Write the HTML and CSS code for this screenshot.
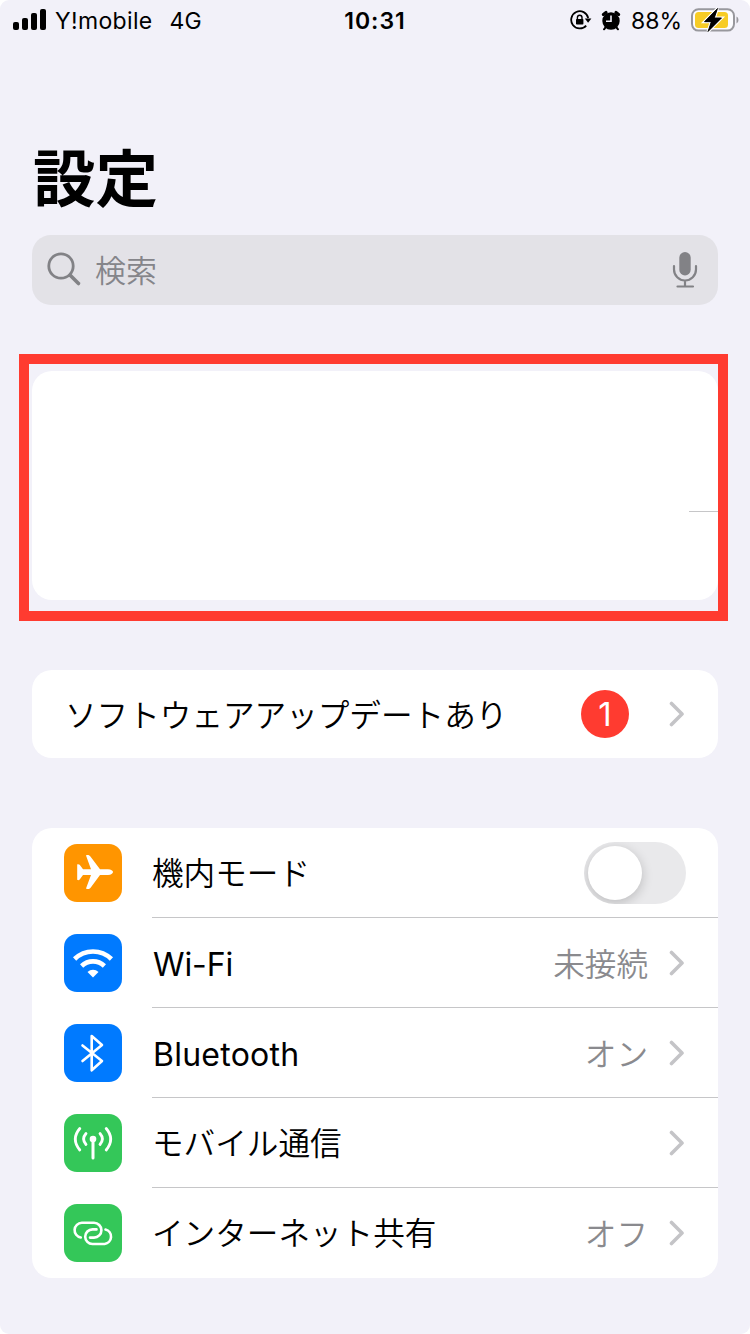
FILE: index.html
```html
<!DOCTYPE html>
<html lang="ja">
<head>
<meta charset="utf-8">
<title>設定</title>
<link rel="stylesheet" href="styles.css">
</head>
<body>
<main class="screen">
  <header class="status">
    <div class="status-left">
      <svg class="signal" width="34" height="22" viewBox="0 0 34 22"><rect x="0" y="13" width="6" height="8" rx="2"/><rect x="9" y="9" width="6" height="12" rx="2"/><rect x="18" y="4" width="6" height="17" rx="2"/><rect x="27" y="0" width="6" height="21" rx="2"/></svg>
      <span class="carrier">Y!mobile</span>
      <span class="network">4G</span>
    </div>
    <span class="clock">10:31</span>
    <div class="status-right">
      <svg class="lock" width="22" height="20" viewBox="0 0 22 20"><path d="M16.200 15.600A8.600 8.600 0 1 1 18.200 8" fill="none" stroke="#000" stroke-width="1.800"/><path d="M14.800 8.400h6.600l-3.300 4.400z"/><rect x="6" y="9" width="7.400" height="5.600" rx=".8"/><path d="M7.400 9.500V7.600a2.300 2.300 0 0 1 4.600 0V9.500" fill="none" stroke="#000" stroke-width="1.400"/></svg>
      <svg class="alarm" width="20" height="21" viewBox="0 0 20 21"><circle cx="10" cy="11" r="8.700"/><path d="M2.400 4.400 5 2.400M17.600 4.400 15 2.400" stroke="#000" stroke-width="3.200" stroke-linecap="round"/><path d="M4.500 17.500 3 19.300M15.500 17.500l1.500 1.800" stroke="#000" stroke-width="2" stroke-linecap="round"/><path d="M10 5.500v5.700H5" fill="none" stroke="#f2f1fa" stroke-width="1.600"/></svg>
      <span class="percent">88%</span>
      <svg class="battery" width="48" height="26" viewBox="0 0 48 26"><rect x="1" y="2.200" width="42" height="21.400" rx="6.500" fill="#fcfcff" stroke="#98989d" stroke-width="2"/><path d="M45.500 9.500q2 .8 2 3.500t-2 3.500z" fill="#98989d"/><rect x="4" y="5" width="33" height="16" rx="3.500" fill="#f7cc25"/><path d="M26.500 1.500 13.500 14.700h6.800L17 24.500 30.500 10.900h-7.200z" stroke="#fff" stroke-width="3" paint-order="stroke"/><path d="M26.500 1.500 13.500 14.700h6.800L17 24.500 30.500 10.900h-7.200z" stroke="#000" stroke-width=".8"/></svg>
    </div>
  </header>

  <h1 class="title">設定</h1>

  <div class="search">
    <svg width="36" height="36" viewBox="0 0 36 36" fill="none" stroke="#828286"><circle cx="14" cy="14" r="12.200" stroke-width="2.800"/><path d="m23.200 23.200 8.300 8.300" stroke-width="3.600" stroke-linecap="round"/></svg>
    <span class="search-text">検索</span>
    <svg width="26" height="38" viewBox="0 0 26 38" fill="none" stroke="#828286" stroke-width="2.200" stroke-linecap="round"><rect x="7.300" y="1" width="11.400" height="23.500" rx="5.700" fill="#828286" stroke="none"/><path d="M2 15v3.500a11 11 0 0 0 22 0V15M13 30v5.500M5.500 35.500h15.500"/></svg>
  </div>

  <section class="highlight">
    <div class="account"><div class="account-rule"></div></div>
  </section>

  <section class="card update">
    <span class="label">ソフトウェアアップデートあり</span>
    <span class="badge">1</span>
    <svg class="chevron" width="16" height="26" viewBox="0 0 16 26"><path d="M2.500 2.500 13 13 2.500 23.500"/></svg>
  </section>

  <section class="card list">
    <div class="row">
      <div class="icon orange"><svg width="58" height="58" viewBox="0 0 58 58"><path fill="#fff" d="M22 11.500c1.500-.9 3.600-.3 4.600 1.200L36 25.200h8c3 0 5 1.400 5 2.900s-2 2.900-5 2.900h-8l-9.400 12.800c-1 1.300-3.100 1.600-4.600.7L27 31H19l-3.300 4.500c-.8.8-2 .8-2.500.3V20.500c.5-.5 1.700-.5 2.500.3L19 25.200h8z"/></svg></div>
      <div class="row-body"><span class="label">機内モード</span><span class="toggle"><span class="knob"></span></span></div>
    </div>
    <div class="row">
      <div class="icon blue"><svg width="58" height="58" viewBox="0 0 58 58" fill="none" stroke="#fff" stroke-width="4.600"><path d="M10.600 25a26.200 26.200 0 0 1 36.800 0"/><path d="M17.600 32a16.400 16.400 0 0 1 22.800 0"/><path d="M29 43.600 23.500 38a8 8 0 0 1 11 0z" fill="#fff" stroke="none"/></svg></div>
      <div class="row-body"><span class="label latin">Wi-Fi</span><span class="value">未接続</span><svg class="chevron" width="16" height="26" viewBox="0 0 16 26"><path d="M2.500 2.500 13 13 2.500 23.500"/></svg></div>
    </div>
    <div class="row">
      <div class="icon blue"><svg width="58" height="58" viewBox="0 0 58 58" fill="none" stroke="#fff" stroke-width="2.600" stroke-linejoin="round" stroke-linecap="round"><path d="m18.500 21.500 19.500 15.500-10.300 9.300V12L38 21 18.500 37"/></svg></div>
      <div class="row-body"><span class="label latin wide">Bluetooth</span><span class="value">オン</span><svg class="chevron" width="16" height="26" viewBox="0 0 16 26"><path d="M2.500 2.500 13 13 2.500 23.500"/></svg></div>
    </div>
    <div class="row">
      <div class="icon green"><svg width="58" height="58" viewBox="0 0 58 58" fill="none" stroke="#fff" stroke-width="2.800" stroke-linecap="round"><circle cx="29" cy="25" r="3.300" fill="#fff" stroke="none"/><path d="M29 26v18" stroke-width="3"/><path d="M22 19.500q-4.800 5.500 0 11M36 19.500q4.800 5.500 0 11M15.800 14.500q-9 10.500 0 21.500M42.200 14.500q9 10.500 0 21.500"/></svg></div>
      <div class="row-body"><span class="label">モバイル通信</span><svg class="chevron" width="16" height="26" viewBox="0 0 16 26"><path d="M2.500 2.500 13 13 2.500 23.500"/></svg></div>
    </div>
    <div class="row">
      <div class="icon green"><svg width="58" height="58" viewBox="0 0 58 58" fill="none" stroke="#fff" stroke-width="2.600" stroke-linecap="round"><path d="M16.800 33.500A7.400 7.400 0 0 1 17.800 18.800H30a7.400 7.400 0 0 1 0 14.800H26"/><path d="M41.500 25.500A7.400 7.400 0 0 1 40.600 40H28.500a7.300 7.300 0 0 1 0-14.600H32.500"/></svg></div>
      <div class="row-body"><span class="label">インターネット共有</span><span class="value">オフ</span><svg class="chevron" width="16" height="26" viewBox="0 0 16 26"><path d="M2.500 2.500 13 13 2.500 23.500"/></svg></div>
    </div>
  </section>
</main>
</body>
</html>
```
FILE: styles.css
```css
* { box-sizing: border-box; }
body { margin: 0; background: #fff; font-family: Inter, "Noto Sans CJK JP", sans-serif; color: #000; }
svg { display: block; flex: none; }
.screen { width: 750px; height: 1334px; background: #f2f1f9; border-radius: 9px; overflow: hidden; display: flex; flex-direction: column; }

.status { height: 40px; display: grid; grid-template-columns: 1fr auto 1fr; align-items: center; padding: 0 11px 0 13px; font-size: 23px; line-height: 38px; white-space: nowrap; }
.status span { padding-top: 2px; }
.status-left, .status-right { display: flex; align-items: center; }
.status-right { justify-content: flex-end; }
.signal { margin-top: -1px; }
.carrier { margin-left: 8px; letter-spacing: .35px; }
.network { margin-left: 17px; }
.clock { font-weight: 600; letter-spacing: 1px; margin-right: 2px; }
.alarm { margin-left: 9px; }
.percent { margin-left: 10px; }
.battery { margin-left: 9px; }

.title { margin: 99px 0 0 33px; height: 80px; font-size: 62.500px; line-height: 80px; font-weight: 700; }

.search { margin: 16px 32px 0; height: 70px; border-radius: 19px; background: #e3e2e7; display: flex; align-items: center; padding: 0 20px 0 15px; }
.search-text { flex: 1; margin-left: 12px; padding-top: 2px; font-size: 31px; line-height: 68px; color: #85858a; font-weight: 350; }

.highlight { margin: 49px 22px 0 19px; height: 267px; border: 10px solid #ff3b30; padding: 7px 0 0 3px; }
.account { width: 686px; height: 229px; border-radius: 20px; background: #fff; display: flex; justify-content: flex-end; padding-top: 140px; }
.account-rule { width: 29px; height: 1px; background: #c6c6c8; }

.card { margin: 0 32px; border-radius: 20px; background: #fff; }
.update { margin-top: 49px; height: 88px; display: flex; align-items: center; padding: 0 33px 0 33px; }
.label { flex: 1; padding-top: 3px; font-size: 31.600px; line-height: 60px; font-weight: 350; white-space: nowrap; }
.latin { padding-top: 4px; padding-left: 1px; font-weight: 400; font-size: 32px; letter-spacing: -.1px; }
.wide { letter-spacing: .25px; }
.badge { width: 48px; height: 48px; border-radius: 50%; background: #ff3b30; color: #fff; font-size: 33px; line-height: 48px; text-align: center; }
.chevron { margin-left: 40px; fill: none; stroke: #c4c4c7; stroke-width: 3.600; stroke-linecap: round; stroke-linejoin: round; }

.list { margin-top: 70px; height: 450px; padding-left: 32px; }
.row { height: 90px; display: flex; align-items: center; }
.icon { width: 58px; height: 58px; border-radius: 13px; flex: none; }
.orange { background: #ff9500; }
.blue { background: #007aff; }
.green { background: #34c759; }
.row-body { flex: 1; height: 90px; margin-left: 30px; padding-right: 33px; display: flex; align-items: center; border-bottom: 1px solid #c6c6c8; }
.row:last-child .row-body { border-bottom-color: transparent; }
.value { padding-top: 4px; font-size: 31.600px; line-height: 60px; color: #8a8a8e; font-weight: 350; }
.row-body .chevron { margin-left: 21px; }
.toggle { width: 102px; height: 62px; margin-right: -1px; border-radius: 31px; background: #e9e9eb; padding: 4px; overflow: hidden; }
.knob { display: block; width: 54px; height: 54px; border-radius: 50%; background: #fff; box-shadow: 0 3px 12px rgba(0,0,0,.2); }
```
